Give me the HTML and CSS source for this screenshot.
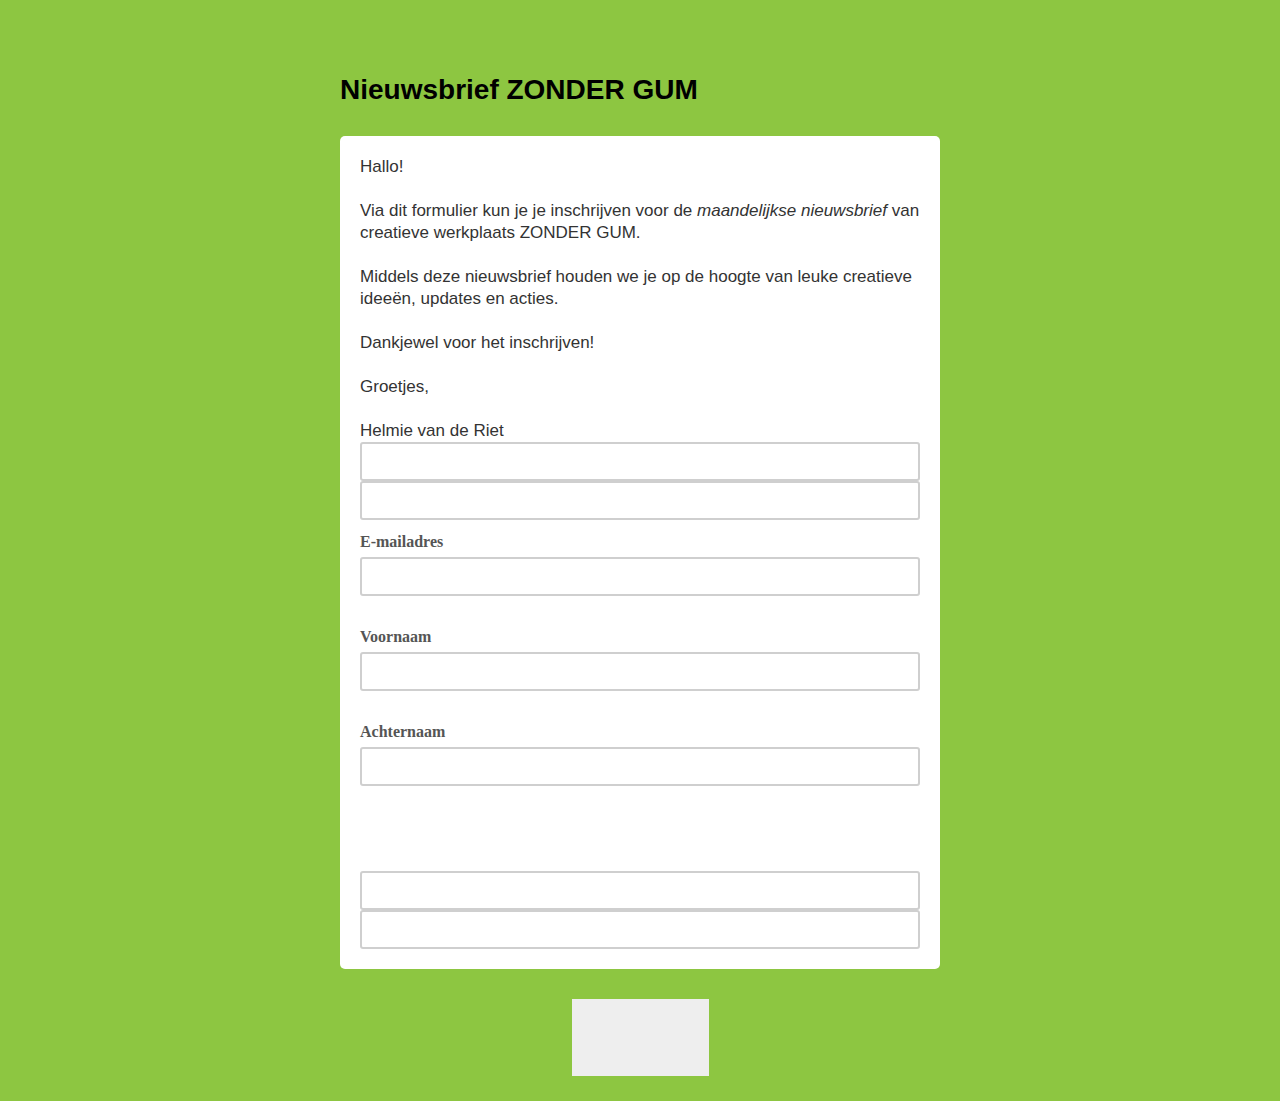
FILE: index.html
```html
<!DOCTYPE html>
<html lang="nl">
<head>
<meta charset="utf-8">
<title>Nieuwsbrief ZONDER GUM</title>
<link rel="stylesheet" href="styles.css">
</head>
<body>
<div class="wrap">
  <h1 class="title">Nieuwsbrief ZONDER GUM</h1>
  <form class="card">
    <div class="intro">
      <p>Hallo!</p>
      <p>Via dit formulier kun je je inschrijven voor de <em>maandelijkse nieuwsbrief</em> van creatieve werkplaats ZONDER GUM.</p>
      <p>Middels deze nieuwsbrief houden we je op de hoogte van leuke creatieve ideeën, updates en acties.</p>
      <p>Dankjewel voor het inschrijven!</p>
      <p>Groetjes,</p>
      <p class="last">Helmie van de Riet</p>
    </div>
    <input class="inp" type="text">
    <input class="inp" type="text">
    <div class="field">
      <label class="lbl">E-mailadres</label>
      <input class="inp" type="email">
    </div>
    <div class="field">
      <label class="lbl">Voornaam</label>
      <input class="inp" type="text">
    </div>
    <div class="field">
      <label class="lbl">Achternaam</label>
      <input class="inp" type="text">
    </div>
    <div class="spacer"></div>
    <input class="inp" type="text">
    <input class="inp" type="text">
  </form>
  <div class="actions">
    <button class="submit" type="button"></button>
  </div>
</div>
</body>
</html>
```
FILE: styles.css
```css
html, body {
  margin: 0;
  padding: 0;
  background: #8dc641;
}
body {
  font-family: "Liberation Sans", Arial, sans-serif;
  color: #333;
}
.wrap {
  width: 600px;
  margin: 0 auto;
  padding-top: 73px;
}
.title {
  margin: 0 0 29px 0;
  font-size: 28px;
  line-height: 34px;
  font-weight: bold;
  color: #000;
}
.card {
  background: #fff;
  border-radius: 5px;
  padding: 20px 20px 20px;
  display: flex;
  flex-direction: column;
}
.intro p {
  margin: 0 0 22px 0;
  font-size: 17px;
  line-height: 22px;
}
.intro p.last {
  margin: 0;
}
.inp {
  display: block;
  box-sizing: border-box;
  width: 560px;
  height: 39px;
  margin: 0;
  border: 2px solid #cfcfcf;
  border-radius: 3px;
  background: #fff;
  padding: 0 8px;
  font-size: 16px;
}
.field {
  display: flex;
  flex-direction: column;
  padding-top: 12px;
  padding-bottom: 19px;
}
.lbl {
  display: block;
  font-family: "Liberation Serif", "Times New Roman", serif;
  font-weight: bold;
  font-size: 16px;
  line-height: 20px;
  color: #555;
  margin-bottom: 5px;
}
.spacer {
  height: 66px;
}
.actions {
  display: flex;
  justify-content: center;
  padding-top: 30px;
  padding-bottom: 25px;
}
.submit {
  width: 137px;
  height: 77px;
  border: none;
  border-radius: 0;
  background: #eeeeee;
  margin: 0;
  padding: 0;
}
```
